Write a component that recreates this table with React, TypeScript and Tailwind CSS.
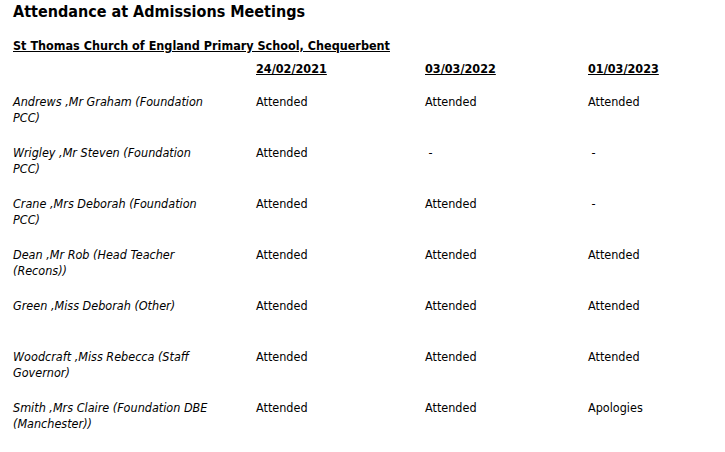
const rows: { name: string; a: string; b: string; c: string }[] = [
  { name: 'Andrews ,Mr Graham (Foundation PCC)', a: 'Attended', b: 'Attended', c: 'Attended' },
  { name: 'Wrigley ,Mr Steven (Foundation PCC)', a: 'Attended', b: '\u00a0-', c: '\u00a0-' },
  { name: 'Crane ,Mrs Deborah (Foundation PCC)', a: 'Attended', b: 'Attended', c: '\u00a0-' },
  { name: 'Dean ,Mr Rob (Head Teacher (Recons))', a: 'Attended', b: 'Attended', c: 'Attended' },
  { name: 'Green ,Miss Deborah (Other)', a: 'Attended', b: 'Attended', c: 'Attended' },
  { name: 'Woodcraft ,Miss Rebecca (Staff Governor)', a: 'Attended', b: 'Attended', c: 'Attended' },
  { name: 'Smith ,Mrs Claire (Foundation DBE (Manchester))', a: 'Attended', b: 'Attended', c: 'Apologies' },
]

const cols = 'grid grid-cols-[243px_169px_163px_1fr]'

export default function App() {
  return (
    <div className="min-h-[452px] bg-white pl-[13px] pt-[2px] text-black font-['DejaVu_Sans_Condensed','Liberation_Sans',sans-serif] text-[12.5px] leading-4">
      <h1 className="text-[16px] leading-[20px] font-bold">Attendance at Admissions Meetings</h1>
      <h2 className="mt-[16px] font-bold underline">St Thomas Church of England Primary School, Chequerbent</h2>

      {/* Date headers */}
      <div className={`${cols} mt-[7px] -ml-[13px] pl-[13px] font-bold underline`}>
        <div />
        <div>24/02/2021</div>
        <div>03/03/2022</div>
        <div>01/03/2023</div>
      </div>

      <div className="mt-[17px]">
        {rows.map((r) => (
          <div key={r.name} className={`${cols} -ml-[13px] pl-[13px] h-[51px]`}>
            <div className="w-[200px] italic">{r.name}</div>
            <div>{r.a}</div>
            <div>{r.b}</div>
            <div>{r.c}</div>
          </div>
        ))}
      </div>
    </div>
  )
}
